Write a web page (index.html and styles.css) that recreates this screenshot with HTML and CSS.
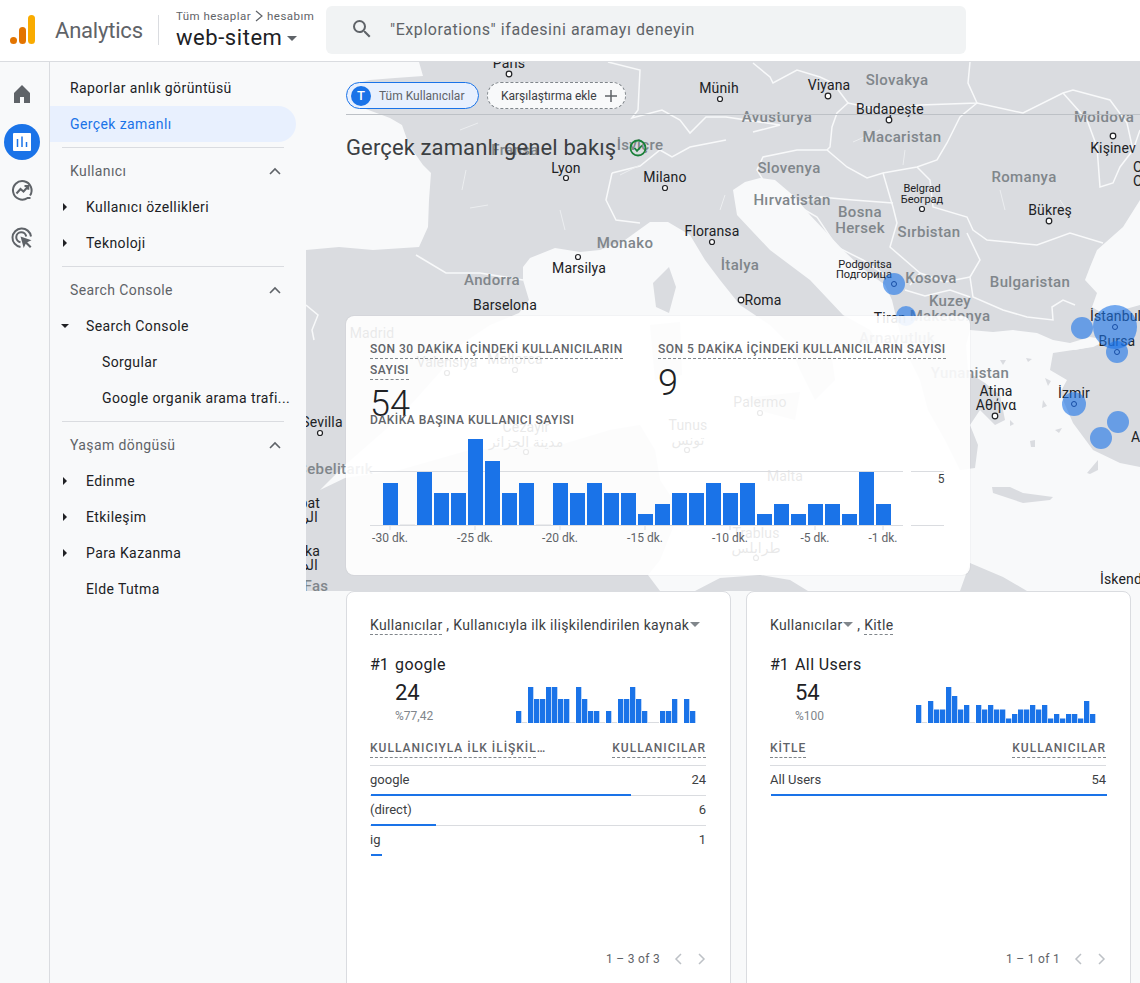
FILE: index.html
```html
<!DOCTYPE html>
<html lang="tr">
<head>
<meta charset="utf-8">
<title>Analytics</title>
<link rel="stylesheet" href="styles.css">
</head>
<body>
<header class="topbar">
  <div class="brand">
    <svg class="logo" viewBox="0 0 28 30" width="28" height="30"><rect class="logo-big" x="19" y="0" width="7" height="29" rx="3.5"/><rect class="logo-mid" x="10" y="12" width="7" height="17" rx="3.5"/><circle class="logo-mid" cx="4.5" cy="25.5" r="3.5"/></svg>
    <span class="brand-name">Analytics</span>
  </div>
  <div class="account">
    <div class="crumbs"><span>Tüm hesaplar</span><svg width="10" height="12" viewBox="0 0 10 12"><path class="crumb-chev" d="M2 1l6 5-6 5"/></svg><span>hesabım</span></div>
    <div class="property"><span>web-sitem</span><i class="caret caret-dark"></i></div>
  </div>
  <div class="search">
    <svg width="24" height="24" viewBox="0 0 24 24"><path class="icon-fill" d="M15.5 14h-.79l-.28-.27A6.47 6.47 0 0 0 16 9.5 6.5 6.5 0 1 0 9.5 16c1.61 0 3.09-.59 4.23-1.57l.27.28v.79l5 4.99L20.49 19l-4.99-5zm-6 0C7.01 14 5 11.99 5 9.5S7.01 5 9.5 5 14 7.01 14 9.5 11.99 14 9.5 14z"/></svg>
    <span>"Explorations" ifadesini aramayı deneyin</span>
  </div>
</header>

<div class="shell">
  <nav class="rail">
    <div class="rail-item"><svg width="24" height="24" viewBox="0 0 24 24"><path class="icon-fill" d="M12 3l8 8v10h-6v-6h-4v6H4V11z"/></svg></div>
    <div class="rail-item"><svg width="36" height="36" viewBox="0 0 36 36"><circle class="active-dot" cx="18" cy="18" r="18"/><rect class="active-sheet" x="9" y="9" width="18" height="18" rx="1"/><path class="active-bars" d="M13.5 15v8M18 12.5v10.500M22.500 18v5"/></svg></div>
    <div class="rail-item"><svg width="24" height="24" viewBox="0 0 24 24"><path class="icon-stroke" d="M20 17.500A9.300 9.300 0 1 0 17.500 20H20.500"/><path class="icon-stroke" d="M6.500 15.500l4-4.500 3 2.500 4.500-5M14.500 8h3.800v3.800"/></svg></div>
    <div class="rail-item"><svg width="24" height="24" viewBox="0 0 24 24"><path class="icon-stroke" d="M21 10.500A9.300 9.300 0 1 0 10.500 21M16.200 10.500A5 5 0 1 0 10.500 16.200"/><path class="icon-fill" d="M10.500 10.500l11 3.700-4.300 2 4.300 4.300-1.500 1.500-4.300-4.300-2 4.300z"/></svg></div>
  </nav>

  <aside class="nav">
    <a class="nav-row">Raporlar anlık görüntüsü</a>
    <a class="nav-row nav-active">Gerçek zamanlı</a>
    <hr class="nav-sep">
    <div class="nav-head"><span>Kullanıcı</span><svg width="12" height="8" viewBox="0 0 12 8"><path class="chev" d="M1 7l5-5 5 5"/></svg></div>
    <a class="nav-row nav-sub"><i class="tri-right"></i>Kullanıcı özellikleri</a>
    <a class="nav-row nav-sub"><i class="tri-right"></i>Teknoloji</a>
    <hr class="nav-sep">
    <div class="nav-head"><span>Search Console</span><svg width="12" height="8" viewBox="0 0 12 8"><path class="chev" d="M1 7l5-5 5 5"/></svg></div>
    <a class="nav-row nav-sub"><i class="tri-down"></i>Search Console</a>
    <a class="nav-row nav-leaf">Sorgular</a>
    <a class="nav-row nav-leaf">Google organik arama trafi...</a>
    <hr class="nav-sep">
    <div class="nav-head"><span>Yaşam döngüsü</span><svg width="12" height="8" viewBox="0 0 12 8"><path class="chev" d="M1 7l5-5 5 5"/></svg></div>
    <a class="nav-row nav-sub"><i class="tri-right"></i>Edinme</a>
    <a class="nav-row nav-sub"><i class="tri-right"></i>Etkileşim</a>
    <a class="nav-row nav-sub"><i class="tri-right"></i>Para Kazanma</a>
    <a class="nav-row nav-sub">Elde Tutma</a>
  </aside>

  <main class="main">
    <section class="overview">
      <svg class="map" viewBox="306 62 834 529" width="834" height="529">
        <rect class="land" x="306" y="62" width="834" height="529"/>
        <path class="sea" d="M306 62H419L423 76 395 78 370 80 350 85 355 105 390 118 402 125 409 145 423 165 431 173 429 200 428 227 419 247 373 250 339 247 306 250Z"/>
        <path class="sea" d="M523 267L523 280 529 300 519 313 490 325 460 345 440 372 415 400 385 430 345 465 320 490 345 478 400 470 470 450 560 445 610 430 640 425 655 450 660 480 680 510 660 560 648 575 660 591 695 591 720 578 760 575 790 580 808 591 960 591 970 563 1003 577 1027 591H1140V467L1120 463 1093 450 1073 423 1060 393 1067 380 1050 370 1053 353 1093 347 1108 340 1090 337 1070 343 1053 340 1037 333 1013 330 993 332 970 330 966 345 968 372 985 383 1000 395 1005 420 995 425 980 410 970 425 978 445 975 468 960 470 945 440 928 410 920 380 905 350 898 325 892 300 885 285 862 268 843 250 810 215 795 197 775 180 760 178 745 182 733 190 737 215 770 250 810 280 843 315 870 330 880 345 860 345 830 345 835 380 815 400 800 370 790 345 770 325 740 305 720 280 705 260 690 235 668 222 650 222 625 240 600 250 580 252 555 248 530 258Z"/>
        <path class="sea" d="M1140 200L1123 227 1097 250 1090 267 1085 280 1097 293 1092 307 1105 315 1115 312 1140 305Z"/>
        <path class="land" d="M653 283L669 267 676 287 669 313 656 307ZM650 325L680 322 682 375 655 380ZM745 398L800 392 795 420 765 412ZM992 487L1010 487 1023 493 1053 497 1050 500 1023 503 993 493ZM1087 473L1098 460 1098 470 1090 474ZM1045 378L1051 381 1048 386ZM1043 400L1047 406 1042 408ZM1026 358L1032 359 1028 362ZM510 365L520 362 518 368ZM1000 360L1006 360 1003 365ZM1030 441L1035 440 1035 447 1031 447ZM1055 430L1062 428 1059 433ZM1010 420L1014 424 1010 426Z"/>
        <path class="sea" d="M1058 344L1085 342 1095 346 1075 350Z"/>
        <g class="borders">
          <path d="M753 63L770 77 773 83 797 70 820 77 833 83 848 103 837 113 832 127 830 147 827 150"/>
          <path d="M848 103L880 110 920 105 977 103 968 83 970 62"/>
          <path d="M977 103L960 117 947 143 937 160 917 167 883 173 867 178 847 167 827 150 797 150 763 157 757 170 765 183"/>
          <path d="M977 103L1023 113 1063 93 1073 90 1110 100 1127 123 1133 150 1120 167 1113 183 1100 187 1097 147 1087 120 1063 93"/>
          <path d="M883 173L890 197 893 207 897 223 890 247 920 273 910 285M917 167L930 180 933 207 967 217 973 230 987 240 1037 245 1070 233 1103 243"/>
          <path d="M967 233L980 260 970 277 973 297 1003 310 1027 317 1053 320 1052 307 1063 300 1075 305"/>
          <path d="M793 203L820 197 853 200 893 203M793 203L817 217 837 247 863 260 885 275M920 273L945 282 970 277M905 290L925 296 950 290 970 297"/>
          <path d="M608 62L640 70 638 110 632 118 662 110 680 120 690 133 706 117 726 117 780 125 753 132M612 173L640 166 660 150 672 157 690 147 726 140M612 173L606 200 616 220 640 223"/>
          <path d="M416 255L446 273 480 273 523 280"/>
          <path d="M306 305L318 315 312 330 314 340M1140 130L1133 150"/>
        </g>
        <g class="fine">
          <path d="M460 130L478 123M466 170L462 190M560 210L565 230M488 205L470 208M620 175L640 165M720 210L725 195M853 142L880 130M905 150L903 165M1000 190L1005 210M1060 200L1070 215"/>
        </g>
        <g class="dots">
          <circle cx="509" cy="74" r="2.800"/><circle cx="720" cy="99" r="2.500"/><circle cx="828" cy="96" r="2.800"/><circle cx="889" cy="120" r="2.800"/><circle cx="1113" cy="136" r="2.800"/><circle cx="566" cy="178" r="2.500"/><circle cx="665" cy="188" r="2.500"/><circle cx="712" cy="242" r="2.500"/><circle cx="578" cy="257" r="2.500"/><circle cx="922" cy="209" r="2.500"/><circle cx="1049" cy="221" r="2.800"/><circle cx="741" cy="300" r="2.800"/><circle cx="320" cy="433" r="2.500"/><circle cx="995" cy="416" r="2.800"/><circle cx="447" cy="373" r="2.500"/><circle cx="515" cy="370" r="2.500"/><circle cx="760" cy="413" r="2.500"/><circle cx="526" cy="452" r="2.500"/><circle cx="687" cy="450" r="2.500"/><circle cx="756" cy="558" r="2.500"/>
        </g>
        <g class="countries">
          <text x="897" y="85">Slovakya</text><text x="777" y="122">Avusturya</text><text x="902" y="142">Macaristan</text><text x="1104" y="122">Moldova</text><text x="789" y="173">Slovenya</text><text x="1024" y="182">Romanya</text><text x="792" y="205">Hırvatistan</text><text x="860" y="217">Bosna</text><text x="860" y="233">Hersek</text><text x="929" y="237">Sırbistan</text><text x="740" y="270">İtalya</text><text x="625" y="248">Monako</text><text x="492" y="285">Andorra</text><text x="931" y="283">Kosova</text><text x="1030" y="287">Bulgaristan</text><text x="950" y="306">Kuzey</text><text x="950" y="321">Makedonya</text><text x="515" y="155">Fransa</text><text x="640" y="150">İsviçre</text><text x="970" y="378">Yunanistan</text><text x="897" y="343">Arnavutluk</text><text x="373" y="474" class="end">Cebelitarık</text><text x="316" y="591">Fas</text>
        </g>
        <g class="cities">
          <text x="509" y="68">Paris</text><text x="719" y="93">Münih</text><text x="829" y="90">Viyana</text><text x="890" y="114">Budapeşte</text><text x="1113" y="153">Kişinev</text><text x="566" y="173">Lyon</text><text x="665" y="182">Milano</text><text x="712" y="236">Floransa</text><text x="579" y="273">Marsilya</text><text x="505" y="310">Barselona</text><text x="1050" y="215">Bükreş</text><text x="763" y="305">Roma</text><text x="322" y="427">Sevilla</text><text x="996" y="396">Atina</text><text x="996" y="410">Αθήνα</text><text x="890" y="323">Tiran</text><text x="1090" y="321" class="start">İstanbul</text><text x="1117" y="346">Bursa</text><text x="1074" y="398">İzmir</text><text x="1131" y="442" class="start">Antalya</text><text x="1100" y="584" class="start">İskenderun</text><text x="320" y="508" class="end">Rabat</text><text x="318" y="522" class="end">الرباط</text><text x="320" y="556" class="end">Kazablanka</text><text x="318" y="570" class="end">الدار البيضاء</text><text x="1133" y="172" class="start">Odesa</text><text x="1133" y="186" class="start">Одеса</text><text x="372" y="338">Madrid</text><text x="447" y="367">Valensiya</text><text x="515" y="364">Mallorca</text><text x="760" y="407">Palermo</text><text x="688" y="430">Tunus</text><text x="688" y="445">تونس</text><text x="526" y="432">Cezayir</text><text x="526" y="447">مدينة الجزائر</text><text x="785" y="481">Malta</text><text x="756" y="538">Trablus</text><text x="756" y="553">طرابلس</text>
        </g>
        <g class="small-cities">
          <text x="922" y="192">Belgrad</text><text x="922" y="203">Београд</text><text x="865" y="268">Podgoritsa</text><text x="864" y="278">Подгорица</text>
        </g>
        <g class="bubbles">
          <circle cx="894" cy="284" r="11"/><circle cx="906" cy="316" r="10"/><circle cx="1115" cy="327" r="22"/><circle cx="1082" cy="328" r="11"/><circle cx="1117" cy="352" r="11"/><circle cx="1074" cy="404" r="12"/><circle cx="1118" cy="422" r="11"/><circle cx="1101" cy="438" r="11"/>
        </g>
        <g class="bubble-dots"><circle cx="894" cy="284" r="2.500"/><circle cx="1115" cy="327" r="2.500"/><circle cx="1117" cy="352" r="2.500"/><circle cx="1074" cy="404" r="2.500"/></g>
      </svg>

      <div class="chips">
        <div class="chip chip-on"><b class="chip-badge">T</b><span>Tüm Kullanıcılar</span></div>
        <div class="chip chip-add"><span>Karşılaştırma ekle</span><svg width="12" height="12" viewBox="0 0 12 12"><path class="plus" d="M6 0v12M0 6h12"/></svg></div>
      </div>
      <div class="title-row">
        <h1>Gerçek zamanlı genel bakış</h1>
        <svg width="18" height="18" viewBox="0 0 18 18"><circle class="ok" cx="9" cy="9" r="7.500"/><path class="ok" d="M5.500 9l2.500 2.800 5-5.300"/></svg>
      </div>

      <div class="rt-card">
        <div class="rt-stats">
          <div class="rt-stat">
            <div class="rt-label"><span>Son 30 dakika içindeki kullanıcıların sayısı</span></div>
            <div class="rt-value">54</div>
          </div>
          <div class="rt-stat">
            <div class="rt-label"><span>Son 5 dakika içindeki kullanıcıların sayısı</span></div>
            <div class="rt-value">9</div>
          </div>
        </div>
        <div class="rt-sub">DAKİKA BAŞINA KULLANICI SAYISI</div>
        <svg class="rt-chart" viewBox="370 430 575 120" width="575" height="120">
          <path class="grid" d="M370 471.500H903M911 471.500H944M370 525.500H903M911 525.500H944M390 525v5M475 525v5M560 525v5M645 525v5M730 525v5M815 525v5M883 525v5M400 525h15M536 525h15"/>
          <path class="bar" d="M383 483h15v42h-15zM417 472h15v53h-15zM434 493h15v32h-15zM451 493h15v32h-15zM468 439h15v86h-15zM485 461h15v64h-15zM502 493h15v32h-15zM519 483h15v42h-15zM553 483h15v42h-15zM570 493h15v32h-15zM587 483h15v42h-15zM604 493h15v32h-15zM621 493h15v32h-15zM638 514h15v11h-15zM655 504h15v21h-15zM672 493h15v32h-15zM689 493h15v32h-15zM706 483h15v42h-15zM723 493h15v32h-15zM740 483h15v42h-15zM757 514h15v11h-15zM774 504h15v21h-15zM791 514h15v11h-15zM808 504h15v21h-15zM825 504h15v21h-15zM842 514h15v11h-15zM859 472h15v53h-15zM876 504h15v21h-15z"/>
          <g class="axis-x"><text x="390" y="542">-30 dk.</text><text x="475" y="542">-25 dk.</text><text x="560" y="542">-20 dk.</text><text x="645" y="542">-15 dk.</text><text x="730" y="542">-10 dk.</text><text x="815" y="542">-5 dk.</text><text x="883" y="542">-1 dk.</text></g>
          <text class="axis-y" x="941" y="483">5</text>
        </svg>
      </div>
    </section>

    <section class="cards">
      <article class="list-card">
        <div class="lc-title"><span class="dashed">Kullanıcılar</span> , Kullanıcıyla ilk ilişkilendirilen kaynak<i class="caret caret-grey"></i></div>
        <div class="lc-top"><span class="lc-rank">#1</span><span>google</span></div>
        <div class="lc-stats">
          <div class="lc-num"><div class="lc-big">24</div><div class="lc-pct">%77,42</div></div>
          <svg class="spark" viewBox="0 0 180 36" width="180" height="36">
            <path class="spark-zero" d="M6 35.500h5M54 35.500h5M84 35.500h5M96 35.500h5M132 35.500h11M168 35.500h5"/>
            <path class="bar" d="M0 24h5.300v12H0zM12 0h5.300v36H12zM18 12h5.300v24H18zM24 12h5.300v24H24zM30 0h5.300v36H30zM36 0h5.300v36H36zM42 12h5.300v24H42zM48 12h5.300v24H48zM60 0h5.300v36H60zM66 12h5.300v24H66zM72 24h5.300v12H72zM78 24h5.300v12H78zM90 24h5.300v12H90zM102 12h5.300v24H102zM108 12h5.300v24H108zM114 0h5.300v36H114zM120 12h5.300v24H120zM126 24h5.300v12H126zM144 24h5.300v12H144zM150 24h5.300v12H150zM156 12h5.300v24H156zM168 12h5.300v24H168zM174 24h5.300v12H174z"/>
          </svg>
        </div>
        <div class="lc-head"><span class="dashed-cell lc-head-clip">KULLANICIYLA İLK İLİŞKİL…</span><span class="dashed-cell">KULLANICILAR</span></div>
        <div class="lc-row"><div class="lc-cells"><span>google</span><span>24</span></div><div class="lc-bar" style="width:260px"></div></div>
        <div class="lc-row"><div class="lc-cells"><span>(direct)</span><span>6</span></div><div class="lc-bar" style="width:65px"></div></div>
        <div class="lc-row lc-row-last"><div class="lc-cells"><span>ig</span><span>1</span></div><div class="lc-bar" style="width:11px"></div></div>
        <div class="pager"><span>1 – 3 of 3</span><svg width="8" height="12" viewBox="0 0 8 12"><path class="pager-chev" d="M7 1L2 6l5 5"/></svg><svg width="8" height="12" viewBox="0 0 8 12"><path class="pager-chev" d="M1 1l5 5-5 5"/></svg></div>
      </article>

      <article class="list-card">
        <div class="lc-title">Kullanıcılar<i class="caret caret-grey"></i> , <span class="dashed">Kitle</span></div>
        <div class="lc-top"><span class="lc-rank">#1</span><span>All Users</span></div>
        <div class="lc-stats">
          <div class="lc-num"><div class="lc-big">54</div><div class="lc-pct">%100</div></div>
          <svg class="spark" viewBox="0 0 180 36" width="180" height="36">
            <path class="spark-zero" d="M6 35.500h5M54 35.500h5"/>
            <path class="bar" d="M0 18h5.300v18H0zM12 14h5.300v22H12zM18 22.500h5.300v13.500H18zM24 22.500h5.300v13.500H24zM30 0h5.300v36H30zM36 9h5.300v27H36zM42 22.500h5.300v13.500H42zM48 18h5.300v18H48zM60 18h5.300v18H60zM66 22.500h5.300v13.500H66zM72 18h5.300v18H72zM78 22.500h5.300v13.500H78zM84 22.500h5.300v13.500H84zM90 31.500h5.300v4.500H90zM96 27h5.300v9H96zM102 22.500h5.300v13.500H102zM108 22.500h5.300v13.500H108zM114 18h5.300v18H114zM120 22.500h5.300v13.500H120zM126 18h5.300v18H126zM132 31.500h5.300v4.500H132zM138 27h5.300v9H138zM144 31.500h5.300v4.500H144zM150 27h5.300v9H150zM156 27h5.300v9H156zM162 31.500h5.300v4.500H162zM168 14h5.300v22H168zM174 27h5.300v9H174z"/>
          </svg>
        </div>
        <div class="lc-head"><span class="dashed-cell">KİTLE</span><span class="dashed-cell">KULLANICILAR</span></div>
        <div class="lc-row lc-row-last"><div class="lc-cells"><span>All Users</span><span>54</span></div><div class="lc-bar" style="width:336px"></div></div>
        <div class="pager"><span>1 – 1 of 1</span><svg width="8" height="12" viewBox="0 0 8 12"><path class="pager-chev" d="M7 1L2 6l5 5"/></svg><svg width="8" height="12" viewBox="0 0 8 12"><path class="pager-chev" d="M1 1l5 5-5 5"/></svg></div>
      </article>
    </section>
  </main>
</div>
</body>
</html>
```

FILE: styles.css
```css
* { box-sizing: border-box; }
html, body { margin: 0; height: 983px; overflow: hidden; }
body { font-family: Roboto, "Noto Sans", sans-serif; background: #f8f9fa; color: #3c4043; }

/* Top bar */
.topbar { height: 62px; background: #fff; border-bottom: 1px solid #dadce0; display: flex; align-items: flex-start; }
.brand { width: 159px; height: 30px; margin-top: 15px; display: flex; align-items: center; border-right: 1px solid #dadce0; padding-left: 9px; }
.logo { flex: none; }
.logo-big { fill: #f9ab00; }
.logo-mid { fill: #e37400; }
.brand-name { margin-left: 18px; font-size: 22px; color: #5f6368; letter-spacing: -.2px; }
.account { margin-left: 17px; width: 150px; padding-top: 9px; }
.crumbs { display: flex; align-items: center; gap: 3px; font-size: 11.500px; color: #5f6368; line-height: 14px; letter-spacing: .45px; white-space: nowrap; }
.crumb-chev { fill: none; stroke: #5f6368; stroke-width: 1.200; }
.property { display: flex; align-items: center; gap: 5px; font-size: 22px; line-height: 28px; color: #202124; margin-top: 1px; letter-spacing: .55px; }
.caret { display: inline-block; width: 0; height: 0; border-left: 5px solid transparent; border-right: 5px solid transparent; border-top: 5px solid #5f6368; }
.search { margin-left: 0; width: 640px; height: 48px; margin-top: 6px; background: #f1f3f4; border-radius: 6px; display: flex; align-items: center; gap: 16px; padding: 0 0 2px 24px; font-size: 16px; color: #5f6368; letter-spacing: .56px; }
.icon-fill { fill: #5f6368; }
.icon-stroke { fill: none; stroke: #5f6368; stroke-width: 2; }

/* Shell */
.shell { display: flex; height: 921px; }
.rail { width: 50px; flex: none; border-right: 1px solid #dadce0; padding-top: 8px; display: flex; flex-direction: column; align-items: center; padding-right: 5px; }
.rail-item { width: 36px; height: 48px; display: flex; align-items: center; justify-content: center; flex: none; }
.active-dot { fill: #1a73e8; }
.active-sheet { fill: #fff; }
.active-bars { stroke: #1a73e8; stroke-width: 1.500; fill: none; }

/* Sidebar */
.nav { width: 256px; flex: none; padding-top: 8px; font-size: 14px; letter-spacing: .4px; }
.nav-row { height: 36px; display: flex; align-items: center; padding-left: 20px; color: #202124; white-space: nowrap; position: relative; }
.nav-active { width: 246px; background: #e8f0fe; color: #1a73e8; border-radius: 0 18px 18px 0; }
.nav-sep { margin: 5px 22px 0 12px; border: 0; border-top: 1px solid #dadce0; height: 0; }
.nav-head { height: 41px; padding: 5px 15px 0 20px; display: flex; justify-content: space-between; align-items: center; color: #5f6368; }
.nav-head svg { margin-right: 10px; }
.chev { fill: none; stroke: #5f6368; stroke-width: 1.600; }
.nav-sub { padding-left: 36px; }
.nav-leaf { padding-left: 52px; }
.tri-right, .tri-down { position: absolute; width: 0; height: 0; }
.tri-right { left: 13px; top: 14px; border-top: 4px solid transparent; border-bottom: 4px solid transparent; border-left: 4px solid #202124; }
.tri-down { left: 11px; top: 16px; border-left: 4px solid transparent; border-right: 4px solid transparent; border-top: 4px solid #202124; }

/* Main */
.main { width: 834px; flex: none; }
.overview { position: relative; height: 529px; padding: 20px 0 0 40px; }
.map { position: absolute; left: 0; top: 0; display: block; }
.land { fill: #dadce0; }
.sea { fill: #f8f9fa; }
.borders path { fill: none; stroke: #f8f9fa; stroke-width: 1.500; }
.fine path { fill: none; stroke: #eceef0; stroke-width: 1; }
.dots circle { fill: #fff; stroke: #202124; stroke-width: 1.200; }
.countries text { font: 500 15px Roboto, sans-serif; letter-spacing: .35px; fill: #80868b; text-anchor: middle; }
.cities text { font: 400 14px Roboto, "Noto Sans", "DejaVu Sans", sans-serif; letter-spacing: .15px; fill: #202124; text-anchor: middle; }
.small-cities text { font: 400 11px Roboto, sans-serif; fill: #202124; text-anchor: middle; }
.cities .start { text-anchor: start; }
.cities .end, .countries .end { text-anchor: end; }
.bubbles circle { fill: #1a73e8; opacity: .6; }
.bubble-dots circle { fill: none; stroke: #174ea6; stroke-width: 1; }

.chips { position: relative; width: 794px; height: 33px; display: flex; gap: 8px; border-bottom: 1px solid #bdc1c6; align-items: flex-start; }
.chip { height: 27px; border-radius: 14px; display: flex; align-items: center; font-size: 12px; }
.chip-on { width: 133px; border: 1px solid #1a73e8; background: #e8f0fe; color: #5f6368; padding-left: 4px; gap: 8px; }
.chip-badge { width: 20px; height: 20px; border-radius: 50%; background: #1a73e8; color: #fff; font-size: 13px; font-weight: 500; display: flex; align-items: center; justify-content: center; }
.chip-add { width: 139px; border: 1px dashed #80868b; background: #f8f9fa; color: #3c4043; padding-left: 13px; gap: 8px; }
.plus { fill: none; stroke: #5f6368; stroke-width: 1.500; }
.title-row { position: relative; display: flex; align-items: center; gap: 13px; margin-top: 17px; height: 32px; }
h1 { margin: 0; font-size: 22px; font-weight: 400; color: #3c4043; line-height: 32px; letter-spacing: .12px; }
.ok { fill: none; stroke: #188038; stroke-width: 1.800; }

.rt-card { position: absolute; left: 40px; top: 254px; width: 624px; height: 259px; background: rgba(255, 255, 255, .9); border-radius: 8px; box-shadow: 0 0 1px rgba(60, 64, 67, .3); padding: 23px 24px 0; }
.rt-stats { display: flex; }
.rt-stat { width: 288px; }
.rt-label { width: 270px; font-size: 12px; font-weight: 500; line-height: 21px; color: #5f6368; text-transform: uppercase; letter-spacing: .5px; }
.rt-label span { border-bottom: 1px dashed #80868b; padding-bottom: 2px; }
.rt-stat:last-child .rt-label { width: 300px; }
.rt-value { margin-top: 10px; height: 23px; line-height: 26px; font-size: 36px; font-weight: 300; color: #202124; }
.rt-sub { font-size: 12px; line-height: 12px; font-weight: 500; color: #5f6368; letter-spacing: .5px; }
.rt-chart { display: block; margin-top: 4px; }
.grid { fill: none; stroke: #dadce0; stroke-width: 1; }
.bar { fill: #1a73e8; }
.axis-x text { font-size: 12px; fill: #5f6368; text-anchor: middle; }
.axis-y { font-size: 12px; fill: #3c4043; text-anchor: middle; }

/* Bottom cards */
.cards { display: flex; gap: 15px; padding-left: 40px; }
.list-card { width: 385px; height: 410px; flex: none; background: #fff; border: 1px solid #dadce0; border-radius: 8px; padding: 23px 24px 31px 23px; display: flex; flex-direction: column; }
.lc-title { font-size: 14px; line-height: 20px; color: #3c4043; white-space: nowrap; letter-spacing: .33px; }
.dashed { border-bottom: 1px dashed #80868b; padding-bottom: 1px; }
.caret-grey { margin-left: 1px; vertical-align: 3px; border-top-color: #80868b; }
.lc-top { margin-top: 20px; height: 20px; line-height: 20px; font-size: 16px; color: #202124; display: flex; letter-spacing: .4px; }
.lc-rank { width: 25px; letter-spacing: 0; }
.lc-stats { margin-top: 5px; display: flex; height: 48px; padding-left: 25px; position: relative; }
.lc-num { width: 121px; }
.lc-big { font-size: 22px; line-height: 26px; color: #202124; }
.lc-pct { font-size: 12px; line-height: 14px; color: #80868b; margin-top: 3px; }
.spark { margin-top: 7px; flex: none; }
.spark-zero { stroke: #dadce0; stroke-width: 1; fill: none; }
.lc-head { margin-top: 12px; height: 26px; display: flex; justify-content: space-between; align-items: flex-start; font-size: 12px; font-weight: 500; letter-spacing: 1px; color: #5f6368; border-bottom: 1px solid #dadce0; }
.dashed-cell { border-bottom: 1px dashed #80868b; line-height: 16px; padding-bottom: 1px; white-space: nowrap; }
.lc-head-clip { width: 166px; overflow: visible; }
.lc-row { height: 30px; border-bottom: 1px solid #dadce0; position: relative; font-size: 13px; }
.lc-row-last { border-bottom: 0; }
.lc-cells { height: 26px; display: flex; justify-content: space-between; align-items: center; color: #3c4043; }
.lc-bar { position: absolute; left: 1px; bottom: -1px; height: 2px; background: #1a73e8; }
.lc-row-last .lc-bar { bottom: 0; }
.pager { margin-top: auto; height: 20px; display: flex; align-items: center; justify-content: flex-end; font-size: 12px; color: #5f6368; gap: 16px; letter-spacing: .3px; }
.pager span { margin-right: -2px; }
.pager-chev { fill: none; stroke: #bdc1c6; stroke-width: 1.500; }
```
